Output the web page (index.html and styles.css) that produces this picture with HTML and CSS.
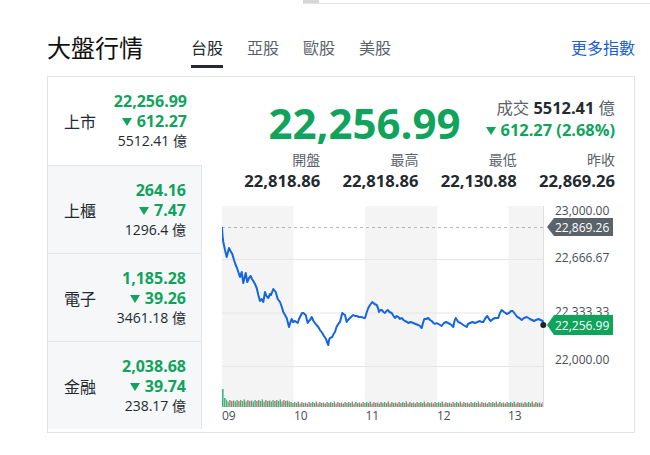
FILE: index.html
```html
<!DOCTYPE html>
<html lang="zh-Hant">
<head>
<meta charset="utf-8">
<title>大盤行情</title>
<link rel="stylesheet" href="styles.css">
</head>
<body>
<div class="topbar"><div class="topbar-thumb"></div></div>
<header class="header">
  <h1 class="title">大盤行情</h1>
  <nav class="tabs">
    <span class="tab active">台股</span>
    <span class="tab">亞股</span>
    <span class="tab">歐股</span>
    <span class="tab">美股</span>
  </nav>
  <a class="more" href="#">更多指數</a>
</header>
<section class="card">
  <div class="markets">
    <div class="market current">
      <span class="m-name">上市</span>
      <div class="m-vals">
        <div class="m-price">22,256.99</div>
        <div class="m-chg"><svg class="tri" viewBox="0 0 10 8" width="10" height="8"><polygon points="0,0 10,0 5,8"/></svg>612.27</div>
        <div class="m-vol">5512.41 億</div>
      </div>
    </div>
    <div class="market">
      <span class="m-name">上櫃</span>
      <div class="m-vals">
        <div class="m-price">264.16</div>
        <div class="m-chg"><svg class="tri" viewBox="0 0 10 8" width="10" height="8"><polygon points="0,0 10,0 5,8"/></svg>7.47</div>
        <div class="m-vol">1296.4 億</div>
      </div>
    </div>
    <div class="market">
      <span class="m-name">電子</span>
      <div class="m-vals">
        <div class="m-price">1,185.28</div>
        <div class="m-chg"><svg class="tri" viewBox="0 0 10 8" width="10" height="8"><polygon points="0,0 10,0 5,8"/></svg>39.26</div>
        <div class="m-vol">3461.18 億</div>
      </div>
    </div>
    <div class="market">
      <span class="m-name">金融</span>
      <div class="m-vals">
        <div class="m-price">2,038.68</div>
        <div class="m-chg"><svg class="tri" viewBox="0 0 10 8" width="10" height="8"><polygon points="0,0 10,0 5,8"/></svg>39.74</div>
        <div class="m-vol">238.17 億</div>
      </div>
    </div>
  </div>
  <div class="main">
    <div class="quote">
      <div class="big">22,256.99</div>
      <div class="info">
        <div class="turnover"><span class="muted">成交 </span><b>5512.41</b><span class="muted"> 億</span></div>
        <div class="change"><svg class="tri" viewBox="0 0 10 8" width="10" height="8"><polygon points="0,0 10,0 5,8"/></svg>612.27 (2.68%)</div>
      </div>
    </div>
    <div class="stats">
      <div class="stat"><div class="s-label">開盤</div><div class="s-val">22,818.86</div></div>
      <div class="stat"><div class="s-label">最高</div><div class="s-val">22,818.86</div></div>
      <div class="stat"><div class="s-label">最低</div><div class="s-val">22,130.88</div></div>
      <div class="stat"><div class="s-label">昨收</div><div class="s-val">22,869.26</div></div>
    </div>
    <svg class="chart" viewBox="222 200 393 225" width="393" height="225">
      <defs>
        <pattern id="volA" x="222" y="395" width="18" height="12" patternUnits="userSpaceOnUse">
          <rect x="0" y="7" width="1.4" height="5" fill="#3cb77d"/>
          <rect x="1.8" y="8" width="1.4" height="4" fill="#ef5b6f"/>
          <rect x="3.6" y="6.5" width="1.4" height="5.5" fill="#3cb77d"/>
          <rect x="5.4" y="8.5" width="1.4" height="3.5" fill="#9c8a72"/>
          <rect x="7.2" y="7" width="1.4" height="5" fill="#ef5b6f"/>
          <rect x="9" y="8" width="1.4" height="4" fill="#3cb77d"/>
          <rect x="10.8" y="7.5" width="1.4" height="4.5" fill="#3cb77d"/>
          <rect x="12.6" y="8.5" width="1.4" height="3.5" fill="#ef5b6f"/>
          <rect x="14.4" y="7" width="1.4" height="5" fill="#a3826f"/>
          <rect x="16.2" y="8" width="1.4" height="4" fill="#3cb77d"/>
        </pattern>
        <pattern id="volB" x="222" y="395" width="18" height="12" patternUnits="userSpaceOnUse">
          <rect x="0" y="5" width="1.4" height="7" fill="#3cb77d"/>
          <rect x="1.8" y="6" width="1.4" height="6" fill="#9c8a72"/>
          <rect x="3.6" y="4.5" width="1.4" height="7.5" fill="#3cb77d"/>
          <rect x="5.4" y="6.5" width="1.4" height="5.5" fill="#3cb77d"/>
          <rect x="7.2" y="5" width="1.4" height="7" fill="#ef5b6f"/>
          <rect x="9" y="6" width="1.4" height="6" fill="#3cb77d"/>
          <rect x="10.8" y="5.5" width="1.4" height="6.5" fill="#a3826f"/>
          <rect x="12.6" y="6.5" width="1.4" height="5.5" fill="#3cb77d"/>
          <rect x="14.4" y="5" width="1.4" height="7" fill="#3cb77d"/>
          <rect x="16.2" y="6" width="1.4" height="6" fill="#ef5b6f"/>
        </pattern>
      </defs>
      <rect x="222" y="206" width="71.5" height="201" fill="#f4f4f4"/>
      <rect x="365" y="206" width="72" height="201" fill="#f4f4f4"/>
      <rect x="508.5" y="206" width="35" height="201" fill="#f4f4f4"/>
      <g stroke="#e6e6e6" stroke-width="1">
        <line x1="222" y1="259.5" x2="543" y2="259.5"/>
        <line x1="222" y1="313" x2="543" y2="313"/>
        <line x1="222" y1="366.5" x2="543" y2="366.5"/>
      </g>
      <line x1="543.5" y1="206" x2="543.5" y2="407" stroke="#dde1e5" stroke-width="1"/>
      <line x1="222" y1="227.5" x2="543" y2="227.5" stroke="#b8b8b8" stroke-width="1" stroke-dasharray="3 3"/>
      <rect x="222" y="389" width="1.6" height="18" fill="#3cb77d"/>
      <rect x="224" y="398" width="1.5" height="9" fill="#3cb77d"/>
      <rect x="226" y="395" width="64" height="12" fill="url(#volB)"/>
      <rect x="290" y="395" width="253" height="12" fill="url(#volA)"/>
      <polyline class="line" points="222,227 222.5,236 223.3,242 225,250 226.7,257 228,252 229,248 230.5,251 232.3,254 234,260 235.7,265 237,268 238.3,272 240,277 241.7,272 243.3,283 244.5,278 245.7,273 247.3,282 249,278 250.7,276 252,279 253.3,281 255,284 256.7,288 258.3,295 260,301 261.5,299 263.3,302 265,292 266.5,296 268.3,298 270,294 271,295 273.3,289 275.7,292 277.7,299 280,302 281.5,306 283.3,312 285,315 286.7,318 288,323 289,327 290.5,322 291.7,319 293,322 295,321 297.7,323 299,319 300,317 302,313 303.3,313 305.7,315 307.7,323 309,321 310,320 311.7,317 313.5,321 315,323 316.5,325 318.3,327 320,330 322.3,333 324,336 326,339 327,342 328.3,345 329,340 330,338 332.3,337 333.5,334 335,332 336.5,327 337.7,325 339,323 340,322 341.5,316 342.3,313 343.5,314 345,315 346.7,322 348,320 350,318 352,316 353.3,315 355,316 356.7,316 359,317 361.7,317 363.5,318 365,318 366.5,313 368.3,308 370,305 372.3,302 374.5,304 376.7,305 378,308 379,312 380.5,310 381.7,310 383.5,312 385,313 386.5,311 387.7,310 389.5,312 391.7,313 393.5,316 395,318 396.7,316 398.3,317 400,319 401.7,318 403.5,320 405,321 407,322 408.3,323 410.5,322 413.3,323 415.5,324 418.3,325 420,326 421.7,328 423,323 424.3,319 426,319 428.3,318 430,320 431.7,321 433.5,323 435,324 436.7,323 438.5,324 441.7,326 444,323 446,322 448,323 450,324 451.5,325 453.3,327 454.5,321 455.7,318 457,320 458.3,322 460.5,323 463.3,325 465,326 466.7,327 468,324 470,323 472.5,322 475,323 477.5,322 480,321 481.5,322 483.3,322 485.5,318 487.3,316 489,319 490.7,321 493,319 495,318 496.7,318 498.3,318 500,313 501.7,310 503,311 504,312 505.5,313 506.7,314 509,313 511,311 512.7,311 515,314 517.3,317 519.5,318 521.7,320 524,318 526.7,317 528.5,318 530,319 532,320 534,321 536,320 538.3,319 540.5,320 542.7,321 543.3,325"/>
      <circle cx="543.3" cy="325" r="3" fill="#1f2328"/>
      <text class="ylab" x="555" y="215">23,000.00</text>
      <text class="ylab" x="555" y="262">22,666.67</text>
      <text class="ylab" x="555" y="316">22,333.33</text>
      <text class="ylab" x="555" y="364">22,000.00</text>
      <polygon points="547,227 554,218 613,218 613,236 554,236" fill="#5b636a"/>
      <text class="tag" x="555" y="231.5">22,869.26</text>
      <polygon points="547,325 554,315 613,315 613,335 554,335" fill="#10a35c"/>
      <text class="tag" x="555" y="329.5">22,256.99</text>
      <text class="xlab" x="222" y="420">09</text>
      <text class="xlab" x="294" y="420">10</text>
      <text class="xlab" x="365.5" y="420">11</text>
      <text class="xlab" x="437" y="420">12</text>
      <text class="xlab" x="508" y="420">13</text>
    </svg>
  </div>
</section>
</body>
</html>
```
FILE: styles.css
```css
* { box-sizing: border-box; }
html, body {
  margin: 0;
  padding: 0;
}
body {
  width: 650px;
  height: 455px;
  overflow: hidden;
  background: #fff;
  color: #232a31;
  font-family: "Open Sans", "Noto Sans CJK TC", sans-serif;
}
.topbar {
  display: flex;
  margin-left: 303px;
  height: 4px;
  border-bottom: 1px solid #e2e2e2;
}
.topbar-thumb {
  width: 16px;
  background: #d7d7d7;
}
.header {
  display: flex;
  align-items: flex-start;
  height: 36px;
  margin: 28px 15px 0 47px;
}
.title {
  margin: 0;
  font-size: 24px;
  line-height: 32px;
  font-weight: 400;
  color: #111;
}
.tabs {
  display: flex;
  gap: 24px;
  margin-left: 48px;
}
.tab {
  font-size: 16px;
  line-height: 33px;
  height: 36px;
  color: #5b636a;
  border-bottom: 3px solid transparent;
}
.tab.active {
  color: #232a31;
  border-bottom-color: #232a31;
}
.more {
  margin-left: auto;
  font-size: 16px;
  line-height: 32px;
  color: #1d5fd2;
  text-decoration: none;
}
.card {
  display: flex;
  height: 357px;
  margin: 8px 15px 0 47px;
  border: 1px solid #e2e2e2;
}
.markets {
  width: 154px;
  flex: none;
}
.market {
  display: flex;
  align-items: center;
  justify-content: space-between;
  height: 88px;
  padding: 0 15px 0 16px;
  background: #f5f7f9;
  border-top: 1px solid #e1e5ea;
  border-right: 1px solid #e1e5ea;
}
.market.current {
  background: #fff;
  border-top: none;
  border-right: none;
}
.m-name {
  font-size: 16px;
  color: #232a31;
}
.m-vals {
  text-align: right;
  line-height: 20px;
}
.m-price, .m-chg {
  font-size: 16px;
  font-weight: 700;
  color: #10a35c;
}
.m-vol {
  font-size: 14px;
  color: #232a31;
}
.tri {
  fill: #10a35c;
  margin-right: 5px;
  vertical-align: 1px;
}
.main {
  flex: 1;
  padding: 0 19px 0 20px;
}
.quote {
  display: flex;
  justify-content: flex-end;
  align-items: flex-start;
  gap: 25px;
  margin-top: 23px;
  height: 46px;
}
.big {
  font-size: 42px;
  line-height: 46px;
  font-weight: 700;
  color: #10a35c;
}
.info {
  margin-top: -3px;
  text-align: right;
  font-size: 16.4px;
  line-height: 22px;
}
.muted {
  color: #5b636a;
}
.turnover b {
  font-weight: 700;
  color: #232a31;
}
.change {
  font-weight: 700;
  color: #10a35c;
}
.stats {
  display: grid;
  grid-template-columns: repeat(4, 1fr);
  margin-top: 4px;
  text-align: right;
}
.s-label {
  font-size: 14px;
  line-height: 20px;
  color: #5b636a;
}
.s-val {
  font-size: 16.6px;
  line-height: 22px;
  font-weight: 700;
  color: #232a31;
}
.chart {
  display: block;
  margin-top: 8px;
}
.line {
  fill: none;
  stroke: #1565e0;
  stroke-width: 2;
  stroke-linejoin: round;
}
.ylab {
  font-family: "Open Sans", sans-serif;
  font-size: 12px;
  fill: #464e56;
}
.tag {
  font-family: "Open Sans", sans-serif;
  font-size: 12px;
  fill: #fff;
}
.xlab {
  font-family: "Open Sans", sans-serif;
  font-size: 12px;
  fill: #464e56;
}
```
